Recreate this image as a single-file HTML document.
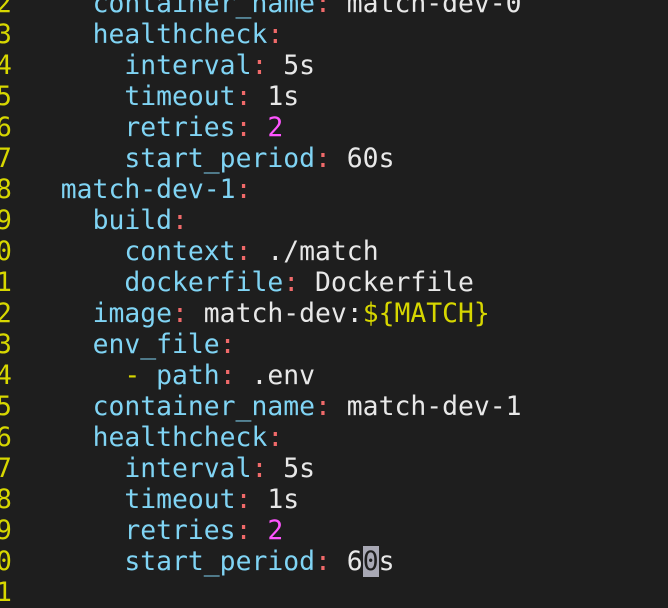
<!DOCTYPE html>
<html><head><style>
html,body{margin:0;padding:0;background:#1e1e1e;width:668px;height:599px;overflow:hidden}
.l{position:absolute;left:0;height:31px;line-height:31px;font-family:"DejaVu Sans Mono","Liberation Mono",monospace;font-size:26.4px;white-space:pre;color:#e8e8e8}
.n{position:absolute;left:-4px;width:16px;color:#d7d700}
.c{position:absolute;left:29px}
.k{color:#80d4f4}.p{color:#f06a6a}.m{color:#ff55ff}.y{color:#d7d700}
.cur{background:#a8a8b4;color:#1e1e1e}
</style></head><body>
<div class="l" style="top:-12px"><span class="n">2</span><span class="c">    <span class="k">container_name</span><span class="p">:</span> match-dev-0</span></div>
<div class="l" style="top:19px"><span class="n">3</span><span class="c">    <span class="k">healthcheck</span><span class="p">:</span></span></div>
<div class="l" style="top:50px"><span class="n">4</span><span class="c">      <span class="k">interval</span><span class="p">:</span> 5s</span></div>
<div class="l" style="top:81px"><span class="n">5</span><span class="c">      <span class="k">timeout</span><span class="p">:</span> 1s</span></div>
<div class="l" style="top:112px"><span class="n">6</span><span class="c">      <span class="k">retries</span><span class="p">:</span> <span class="m">2</span></span></div>
<div class="l" style="top:143px"><span class="n">7</span><span class="c">      <span class="k">start_period</span><span class="p">:</span> 60s</span></div>
<div class="l" style="top:174px"><span class="n">8</span><span class="c">  <span class="k">match-dev-1</span><span class="p">:</span></span></div>
<div class="l" style="top:205px"><span class="n">9</span><span class="c">    <span class="k">build</span><span class="p">:</span></span></div>
<div class="l" style="top:236px"><span class="n">0</span><span class="c">      <span class="k">context</span><span class="p">:</span> ./match</span></div>
<div class="l" style="top:267px"><span class="n">1</span><span class="c">      <span class="k">dockerfile</span><span class="p">:</span> Dockerfile</span></div>
<div class="l" style="top:298px"><span class="n">2</span><span class="c">    <span class="k">image</span><span class="p">:</span> match-dev:<span class="y">${MATCH}</span></span></div>
<div class="l" style="top:329px"><span class="n">3</span><span class="c">    <span class="k">env_file</span><span class="p">:</span></span></div>
<div class="l" style="top:360px"><span class="n">4</span><span class="c">      <span class="y">-</span> <span class="k">path</span><span class="p">:</span> .env</span></div>
<div class="l" style="top:391px"><span class="n">5</span><span class="c">    <span class="k">container_name</span><span class="p">:</span> match-dev-1</span></div>
<div class="l" style="top:422px"><span class="n">6</span><span class="c">    <span class="k">healthcheck</span><span class="p">:</span></span></div>
<div class="l" style="top:453px"><span class="n">7</span><span class="c">      <span class="k">interval</span><span class="p">:</span> 5s</span></div>
<div class="l" style="top:484px"><span class="n">8</span><span class="c">      <span class="k">timeout</span><span class="p">:</span> 1s</span></div>
<div class="l" style="top:515px"><span class="n">9</span><span class="c">      <span class="k">retries</span><span class="p">:</span> <span class="m">2</span></span></div>
<div class="l" style="top:546px"><span class="n">0</span><span class="c">      <span class="k">start_period</span><span class="p">:</span> 6<span class="cur">0</span>s</span></div>
<div class="l" style="top:577px"><span class="n">1</span></div>
</body></html>
